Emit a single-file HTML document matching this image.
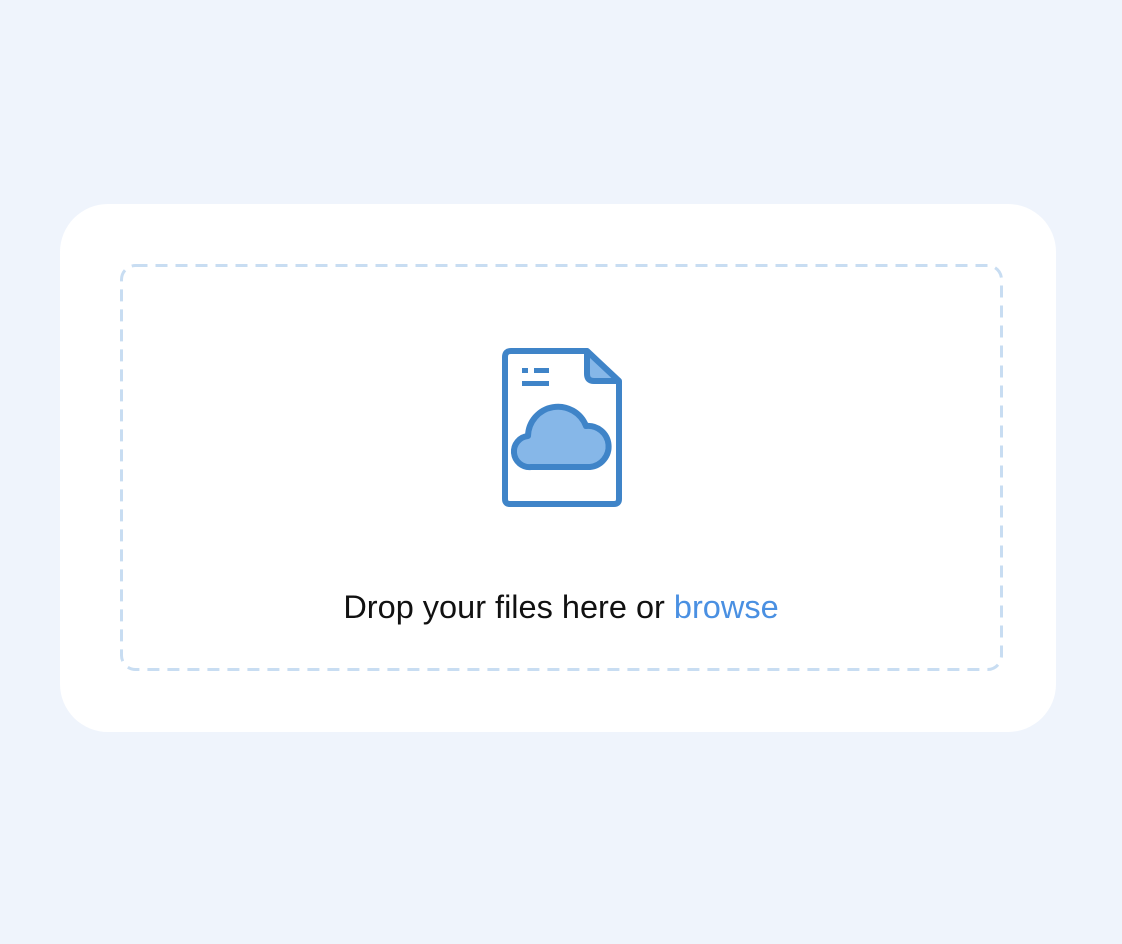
<!DOCTYPE html>
<html><head><meta charset="utf-8"><style>
html,body{margin:0;padding:0;width:1122px;height:944px;background:#eff4fc;overflow:hidden;font-family:"Liberation Sans",Arial,sans-serif}
.card{position:absolute;left:60px;top:204px;width:996px;height:528px;background:#fff;border-radius:48px}
.txt{position:absolute;left:0;width:1122px;top:588px;text-align:center;font-size:32.5px;color:#111;line-height:38px}
.txt span{color:#4a90e2}
svg{position:absolute;left:0;top:0}
</style></head><body>
<div class="card"></div>
<svg width="1122" height="944">
<rect x="121.5" y="265.5" width="880" height="404" rx="14" fill="none" stroke="#c8ddf2" stroke-width="3" stroke-dasharray="12 8"/>
<g stroke="#3f84c8" stroke-width="6" stroke-linejoin="round" fill="none">
<path d="M511 351 H587 L619 382 V499 Q619 504 614 504 H510 Q505 504 505 499 V357 Q505 351 511 351 Z" fill="#fff"/>
<path d="M587 351 V374 Q587 381 594 381 H619 Z" fill="#86b7e8"/>
<path d="M531 467 A15.5 15.5 0 0 1 528 436 A30 30 0 0 1 586 426 A20.5 20.5 0 0 1 590 467 Z" fill="#86b7e8"/>
</g>
<g fill="#3f84c8">
<rect x="522" y="368" width="6" height="5"/>
<rect x="534" y="368" width="15" height="5"/>
<rect x="522" y="381" width="27" height="5"/>
</g>
</svg>
<div class="txt">Drop your files here or <span>browse</span></div>
</body></html>
